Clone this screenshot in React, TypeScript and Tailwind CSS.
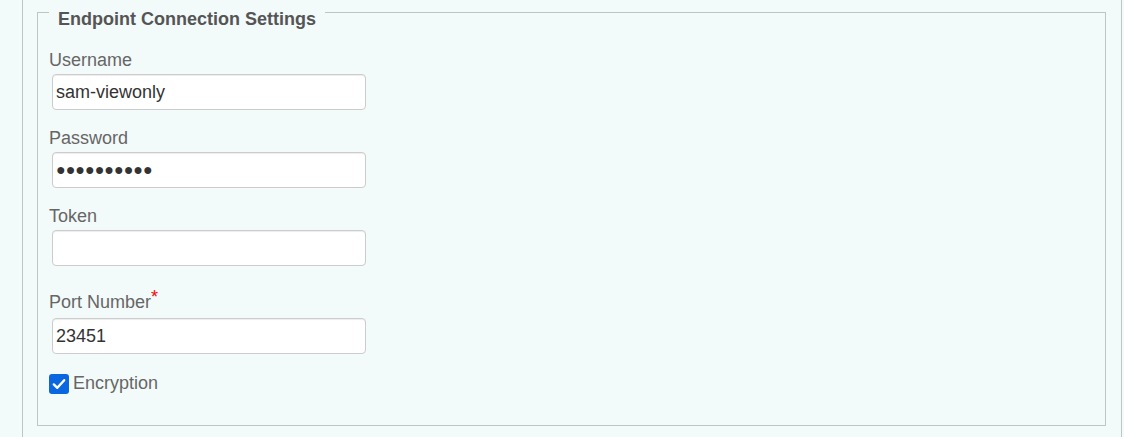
export default function App() {
  const inputCls =
    "ml-[3px] mt-[3px] block h-[36px] w-[314px] rounded-[4px] border border-[#cccccc] bg-white px-[3px] text-[18px] text-[#333333] shadow-[inset_0_1px_1px_rgba(0,0,0,0.075)] outline-none font-['Liberation_Sans',Arial,sans-serif]";
  const labelCls = "block text-[18px] leading-[21px] text-[#666666]";
  return (
    <div className="h-[437px] w-[1124px] overflow-hidden bg-[#f3fafa] font-['Liberation_Sans',Arial,sans-serif]">
      <div className="ml-[22px] h-full w-[1100px] border-x border-[#bfc4c4] pl-[14px] pr-[15px] pt-[12px]">
        <div className="border border-[#bfc4c4] pb-[31px] pl-[11px]">
          <div className="-mt-[4px] w-fit bg-[#f3fafa] px-[9px] text-[18px] font-bold leading-[21px] text-[#555555]">
            Endpoint Connection Settings
          </div>
          <div className="mt-[20px] flex flex-col">
            <div className="mb-[18px]">
              <label className={labelCls}>Username</label>
              <input className={inputCls} defaultValue="sam-viewonly" readOnly />
            </div>
            <div className="mb-[18px]">
              <label className={labelCls}>Password</label>
              <input
                className={inputCls + " !text-[16px] tracking-[0px]"}
                defaultValue="●●●●●●●●●●"
                readOnly
              />
            </div>
            <div className="mb-[18px]">
              <label className={labelCls}>Token</label>
              <input className={inputCls} defaultValue="" readOnly />
            </div>
            <div>
              <label className={labelCls + " pb-[2px] pt-[8px]"}>
                Port Number
                <span className="relative -top-[5px] text-[#ff0000]">*</span>
              </label>
              <input className={inputCls} defaultValue="23451" readOnly />
            </div>
            <div className="mt-[19px] flex h-[21px] items-center gap-[4px]">
              <span className="flex h-[20px] w-[20px] items-center justify-center rounded-[3px] bg-[#0b67e0]">
                <svg width="16" height="16" viewBox="0 0 16 16" fill="none">
                  <path d="M2.8 8.4 L6.3 11.8 L13.2 4.2" stroke="white" strokeWidth="2.4" strokeLinecap="round" strokeLinejoin="round" />
                </svg>
              </span>
              <span className="text-[18px] leading-[21px] text-[#666666]">Encryption</span>
            </div>
          </div>
        </div>
      </div>
    </div>
  );
}
